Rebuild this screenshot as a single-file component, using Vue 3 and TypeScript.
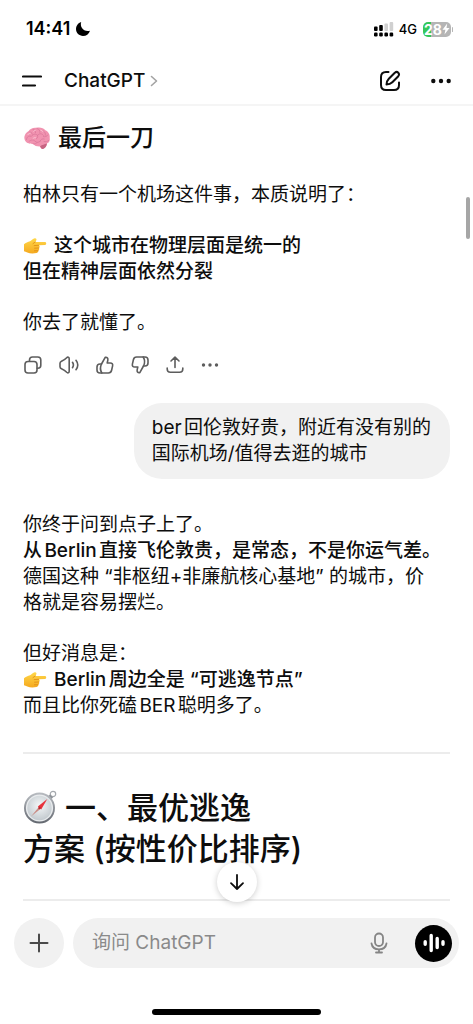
<script setup lang="ts">
import { ref } from 'vue'

interface Line {
  text: string
  strong?: boolean
  hand?: boolean
}

const draft = ref('')

const closing: Line[][] = [
  [{ text: '柏林只有一个机场这件事，本质说明了：' }],
  [
    { text: '这个城市在物理层面是统一的', strong: true, hand: true },
    { text: '但在精神层面依然分裂', strong: true },
  ],
  [{ text: '你去了就懂了。' }],
]

const question: string[] = ['ber回伦敦好贵，附近有没有别的', '国际机场/值得去逛的城市']

const answer: Line[][] = [
  [
    { text: '你终于问到点子上了。' },
    { text: '从Berlin直接飞伦敦贵，是常态，不是你运气差。', strong: true },
    { text: '德国这种 “非枢纽+非廉航核心基地” 的城市，价' },
    { text: '格就是容易摆烂。' },
  ],
  [
    { text: '但好消息是：' },
    { text: 'Berlin周边全是 “可逃逸节点”', strong: true, hand: true },
    { text: '而且比你死磕BER聪明多了。' },
  ],
]
</script>

<template>
  <div class="screen" lang="zh-CN">
    <svg class="defs" width="0" height="0" aria-hidden="true">
      <defs>
        <linearGradient id="handFill" x1="0" y1="0" x2="0" y2="1">
          <stop offset="0" stop-color="#ffd84a" />
          <stop offset="1" stop-color="#f5a91f" />
        </linearGradient>
        <symbol id="hand" viewBox="0 0 24 18">
          <path d="M1 7.2C2.6 5.6 5 5 7 4.2 8.6 3.4 10 1.6 11.7 1.2c1.5-.3 2.3 1 1.5 2.2L12.300 5h9.600c1.700 0 1.800 2.800.1 2.900l-6 .4c1 .8.9 2.100-.1 2.700.7.9.4 2.200-.7 2.600.4 1.200-.3 2.200-1.600 2.400-3.200.6-6.800.6-9.300-.5C3 15 2 14.600 1 14.300Z" fill="url(#handFill)" />
          <path d="M15.600 8.300l-4.400.3M15.800 11l-4.200.2M15 13.700l-3.600.1M12.300 5 10 6.600" fill="none" stroke="#dd8a14" stroke-width=".8" stroke-linecap="round" />
        </symbol>
      </defs>
    </svg>

    <header class="top">
      <div class="status">
        <span class="time">14:41</span>
        <svg class="moon" width="16" height="16" viewBox="0 0 16 16" aria-hidden="true">
          <path d="M6.200 1C4.600 5.800 8.400 11.200 15 9.700 13.900 13 11.200 15 8 15 4.100 15 1 12 1 8.100 1 4.900 3.100 2 6.200 1Z" fill="#000" />
        </svg>
        <span class="spacer"></span>
        <svg width="20" height="16" viewBox="0 0 20 16" aria-hidden="true">
          <g fill="#000">
            <rect x="0" y="5.500" width="3.600" height="4.500" rx="1" />
            <rect x="5.200" y="4" width="3.600" height="6" rx="1" />
            <rect x="0" y="11.500" width="3.600" height="4" rx="1.200" />
            <rect x="5.200" y="11.500" width="3.600" height="4" rx="1.200" />
            <rect x="10.400" y="11.500" width="3.600" height="4" rx="1.200" />
            <rect x="15.600" y="11.500" width="3.600" height="4" rx="1.200" />
          </g>
          <rect x="10.400" y="2.500" width="3.600" height="7.500" rx="1" fill="#d0d0d0" />
          <rect x="15.600" y="1" width="3.600" height="9" rx="1" fill="#d0d0d0" />
        </svg>
        <span class="network">4G</span>
        <span class="battery">
          <span>28</span>
          <svg width="8" height="12" viewBox="0 0 8 12" aria-hidden="true">
            <path d="M5.200.5.500 6.800h2.900L2.500 11.500 7.500 5H4.500Z" fill="#fff" />
          </svg>
        </span>
      </div>

      <nav class="nav">
        <button class="plain" type="button" aria-label="菜单">
          <svg width="20" height="20" viewBox="0 0 20 20">
            <path d="M1 5.500h18M1 14.500h12" stroke="#0d0d0d" stroke-width="2.200" stroke-linecap="round" />
          </svg>
        </button>
        <button class="plain model" type="button">
          ChatGPT
          <svg width="8" height="12" viewBox="0 0 8 12" aria-hidden="true">
            <path d="M1.500 1.500 6.500 6l-5 4.500" fill="none" stroke="#a3a3a3" stroke-width="1.600" stroke-linecap="round" stroke-linejoin="round" />
          </svg>
        </button>
        <span class="spacer"></span>
        <button class="plain" type="button" aria-label="新聊天">
          <svg width="22" height="22" viewBox="0 0 22 22" fill="none" stroke="#0d0d0d" stroke-width="2" stroke-linecap="round" stroke-linejoin="round">
            <path d="M9.500 2H7C3.500 2 2 3.500 2 7v8c0 3.500 1.500 5 5 5h8c3.500 0 5-1.500 5-5v-2.500" />
            <path d="M7.500 14.500c.1-2.400.7-4.200 2.300-5.800l6-6c2.600-2.100 5.500.9 3.500 3.500l-6 6c-1.600 1.600-3.400 2.200-5.800 2.300Z" />
          </svg>
        </button>
        <button class="plain more" type="button" aria-label="更多">
          <svg width="20" height="6" viewBox="0 0 20 6" fill="#0d0d0d">
            <circle cx="2.300" cy="3" r="2.200" /><circle cx="10" cy="3" r="2.200" /><circle cx="17.700" cy="3" r="2.200" />
          </svg>
        </button>
      </nav>
    </header>

    <main class="chat">
      <h2 class="closing-title">
        <svg width="28" height="24" viewBox="0 0 28 24" aria-hidden="true">
          <path d="M1.500 13C.8 9.500 3 6.500 5.500 5.200 7 2.600 10.500 1.200 13.500 1.800 17 .8 20.500 2 22.300 4.200 25.500 5.500 27.300 9 26.700 12c.6 2.600-.7 4.900-2.800 5.600-.1 2-1.100 4.500-3.400 5.200-1.900.5-2.700-1.100-3.500-2.400-3 .1-5.600-.7-6.800-2.500-3.300.2-8.100-.8-8.700-4.900Z" fill="#f193b0" />
          <path d="M17 20.400c.8 1.300 1.600 2.900 3.500 2.400 2.300-.7 3.300-3.200 3.400-5.200-2.400.8-4.900 1.300-6.900 2.800Z" fill="#c76482" />
          <path d="M3.500 13.500c.3-3 2.300-3.800 4.500-3.300M6 6c1.500-.3 3 .5 3.300 2M10 3.500c2 .2 2.800 1.500 2.500 3.200M14 2.500c2.200.8 3.300 2 2.900 3.900M8.300 10.200c2-2.500 4.500-2.500 6.300-.9 1.800-2.300 4.700-1.900 5.800.1M6 15.500c2-2 4.500-2 6-.3 1.600 1.500 3.600 1.500 5.200 0M10.200 17.900c1.800.3 3.200-.4 4-1.400M20.500 5c1.600 1 2.200 2.500 1.800 4.300M24.800 9c-1 1.600-2.500 2-4.400 1.600M17.200 15.200c.5-2 2.200-2.800 4-2.200M25.600 14.500c-1.300 1.300-3 1.600-4.600 1M14.600 9.300c.4 1.500.1 2.700-1.100 3.400" fill="none" stroke="#d9799a" stroke-width=".8" stroke-linecap="round" />
          <path d="M5 8.500c.6-1 1.300-1.300 2.200-1.300M10.700 5.200c.4-.5.900-.8 1.500-.8M17.800 4.200c1 .2 1.700.7 2 1.500M10 12.500c.7-.7 1.600-1 2.500-.8" fill="none" stroke="#fbc4d4" stroke-width="1" stroke-linecap="round" />
        </svg>
        <span>最后一刀</span>
      </h2>

      <p v-for="(para, i) in closing" :key="i" class="para">
        <span v-for="line in para" :key="line.text" class="line" :class="{ strong: line.strong }">
          <svg v-if="line.hand" class="hand" width="24" height="18" aria-hidden="true"><use href="#hand" /></svg>{{ line.text }}
        </span>
      </p>

      <div class="actions">
        <button class="plain" type="button" aria-label="复制">
          <svg width="20" height="20" viewBox="0 0 20 20">
            <rect x="2" y="6.500" width="12" height="11.500" rx="3" />
            <path d="M6.500 6.300V5c0-2 1-3 3-3h5.300c2 0 3 1 3 3v5.200c0 2-1 3-3 3h-.6" />
          </svg>
        </button>
        <button class="plain" type="button" aria-label="朗读">
          <svg width="22" height="20" viewBox="0 0 22 20">
            <path d="M2 8.300c0-1 .6-1.700 1.500-2.100C5.800 5.200 7.200 4.300 8.700 2.700c1-1 2.500-.5 2.500 1v12.600c0 1.500-1.500 2-2.500 1-1.500-1.600-2.900-2.500-5.200-3.500C2.600 13.400 2 12.700 2 11.700Z" />
            <path d="M14.500 7.300c1.100 1.600 1.100 3.800 0 5.400M18 5.300c2.200 2.900 2.200 6.500 0 9.400" />
          </svg>
        </button>
        <button class="plain" type="button" aria-label="赞">
          <svg width="20" height="20" viewBox="0 0 20 20">
            <path d="M6.500 9 10.200 2.300c2.200-.3 3 1.200 2.600 3L12.200 8h3.100c1.800 0 2.700 1.200 2.300 2.900l-1 4.400c-.4 1.800-1.400 2.700-3.200 2.700H5c-2 0-3-1-3-3v-3c0-2 1-3 3-3Z" />
            <path d="M6.500 9c-1.200 2.400-1.200 6.500.3 9" />
          </svg>
        </button>
        <button class="plain" type="button" aria-label="踩">
          <svg width="20" height="20" viewBox="0 0 20 20">
            <path d="M13.500 11 9.800 17.700c-2.200.3-3-1.200-2.600-3L7.800 12H4.700c-1.800 0-2.700-1.200-2.300-2.900l1-4.400C3.800 2.900 4.800 2 6.600 2H15c2 0 3 1 3 3v3c0 2-1 3-3 3Z" />
            <path d="M13.500 11c1.200-2.400 1.200-6.500-.3-9" />
          </svg>
        </button>
        <button class="plain" type="button" aria-label="分享">
          <svg width="20" height="20" viewBox="0 0 20 20">
            <path d="M10 12.500V2.300M6 6l4-3.800L14 6M2.200 13v1c0 2.300 1 3.300 3.200 3.300h9.200c2.200 0 3.200-1 3.200-3.300v-1" />
          </svg>
        </button>
        <button class="plain dots" type="button" aria-label="更多操作">
          <svg width="20" height="20" viewBox="0 0 20 20">
            <circle cx="3.500" cy="10" r="1.700" /><circle cx="10" cy="10" r="1.700" /><circle cx="16.500" cy="10" r="1.700" />
          </svg>
        </button>
      </div>

      <div class="bubble">
        <span v-for="row in question" :key="row" class="line">{{ row }}</span>
      </div>

      <p v-for="(para, i) in answer" :key="i" class="para">
        <span v-for="line in para" :key="line.text" class="line" :class="{ strong: line.strong }">
          <svg v-if="line.hand" class="hand" width="24" height="18" aria-hidden="true"><use href="#hand" /></svg>{{ line.text }}
        </span>
      </p>

      <hr class="rule" />

      <h1 class="section">
        <span class="line">
          <svg class="compass" width="34" height="34" viewBox="0 0 34 34" aria-hidden="true">
            <defs>
              <linearGradient id="rim" x1="0" y1="0" x2="0" y2="1">
                <stop offset="0" stop-color="#b9bdc2" />
                <stop offset="1" stop-color="#62676f" />
              </linearGradient>
              <radialGradient id="face" cx=".5" cy=".4" r=".6">
                <stop offset="0" stop-color="#f4f7f8" />
                <stop offset="1" stop-color="#c3cacf" />
              </radialGradient>
            </defs>
            <circle cx="30" cy="4" r="2.700" fill="none" stroke="#a5a9ae" stroke-width="1.200" />
            <path d="m26 5.500 3 3" stroke="#8d9298" stroke-width="3" />
            <circle cx="16.500" cy="18" r="15.500" fill="url(#rim)" />
            <circle cx="16.500" cy="18" r="13.600" fill="#e9ecee" />
            <circle cx="16.500" cy="18" r="12.200" fill="url(#face)" />
            <path d="M14.800 16.400 24.300 9 18.200 19.500Z" fill="#e8333c" />
            <path d="m15.600 17.200-7.400 9.100 9.200-7.300Z" fill="#c98d86" />
            <circle cx="16.500" cy="18" r="1.200" fill="#b82730" />
          </svg>一、最优逃逸
        </span>
        <span class="line">方案 (按性价比排序)</span>
      </h1>

      <hr class="rule last" />
      <span class="scroll-thumb" aria-hidden="true"></span>
    </main>

    <footer class="bottom">
      <button class="to-end" type="button" aria-label="滚动到底部">
        <svg width="18" height="18" viewBox="0 0 18 18">
          <path d="M9 2v14M3 10.200 9 16l6-5.800" fill="none" stroke="#0d0d0d" stroke-width="1.800" stroke-linecap="round" stroke-linejoin="round" />
        </svg>
      </button>
      <form class="composer" @submit.prevent>
        <button class="add" type="button" aria-label="添加">
          <svg width="20" height="20" viewBox="0 0 20 20">
            <path d="M10 1.500v17M1.500 10h17" stroke="#4a4a4a" stroke-width="2" stroke-linecap="round" />
          </svg>
        </button>
        <div class="field">
          <input v-model="draft" type="text" placeholder="询问 ChatGPT" aria-label="询问 ChatGPT" />
          <button class="plain" type="button" aria-label="听写">
            <svg width="18" height="22" viewBox="0 0 18 22" fill="none" stroke="#858585" stroke-width="1.800" stroke-linecap="round">
              <rect x="5" y="1.500" width="8" height="12.500" rx="4" />
              <path d="M1.500 11.500c.6 3.600 3.500 5.800 7.500 5.800s6.900-2.200 7.500-5.800M9 17.500v3M6 20.500h6" />
            </svg>
          </button>
          <button class="voice" type="button" aria-label="语音">
            <svg width="22" height="22" viewBox="0 0 22 22" stroke="#fff" stroke-width="3.400" stroke-linecap="round">
              <path d="M2.200 9.700v2.600M8.200 3.500v15M14.200 6.500v9M20 9.700v2.600" />
            </svg>
          </button>
        </div>
      </form>
      <div class="home-bar"></div>
    </footer>
  </div>
</template>

<style>
body {
  background: #fff;
}
</style>

<style scoped>
.screen {
  display: flex;
  flex-direction: column;
  min-height: 100vh;
  color: #0d0d0d;
  font-family: Inter, 'Noto Sans CJK SC', sans-serif;
  font-size: 19px;
  line-height: 26px;
  text-autospace: normal;
  background: #fff;
}
.defs {
  position: absolute;
}
button {
  display: flex;
  align-items: center;
  justify-content: center;
  padding: 0;
  border: 0;
  color: inherit;
  font: inherit;
  cursor: pointer;
}
.plain {
  background: none;
}
svg {
  flex: none;
}
.spacer {
  flex: 1;
}
.top {
  border-bottom: 2px solid #f5f5f5;
}
.status {
  display: flex;
  align-items: center;
  height: 58px;
  padding: 0 20px 0 26px;
  color: #000;
}
.time {
  font-size: 18px;
  font-weight: 600;
}
.moon {
  margin-left: 5px;
}
.network {
  margin: 0 6px 0 5px;
  font-size: 13px;
  font-weight: 500;
}
.battery {
  position: relative;
  display: flex;
  align-items: center;
  justify-content: center;
  width: 28px;
  height: 15px;
  margin-right: 2px;
  border-radius: 5px;
  color: #fff;
  font-size: 14px;
  font-weight: 700;
  line-height: 15px;
  background: linear-gradient(to right, #34c759 8px, #b5b5b5 8px);
}
.battery::after {
  position: absolute;
  right: -2px;
  width: 1px;
  height: 5px;
  border-radius: 1px;
  background: #b5b5b5;
  content: '';
}
.nav {
  display: flex;
  align-items: center;
  height: 46px;
  padding: 0 22px;
}
.model {
  gap: 5px;
  margin-left: 22px;
  font-weight: 500;
}
.more {
  margin-left: 30px;
}
.chat {
  position: relative;
  flex: 1;
  padding: 16px 23px 0;
}
.closing-title {
  display: flex;
  align-items: center;
  gap: 7px;
  margin: 0 0 28px;
  font-size: 24px;
  font-weight: 500;
  line-height: 32px;
}
.para {
  margin: 0 0 25px;
}
.line {
  display: block;
  white-space: nowrap;
}
.strong {
  font-weight: 500;
}
.hand {
  margin-right: 7px;
  vertical-align: -3px;
}
.actions {
  display: flex;
  gap: 15px;
  margin: -6px 0 28px;
}
.actions svg {
  fill: none;
  stroke: #5d5d5d;
  stroke-width: 1.6;
  stroke-linecap: round;
  stroke-linejoin: round;
}
.actions .dots svg {
  fill: #5d5d5d;
  stroke: none;
}
.bubble {
  width: fit-content;
  margin: 0 0 33px auto;
  padding: 12px 19px 12px 18px;
  border-radius: 28px;
  background: #f1f1f1;
}
.rule {
  height: 2px;
  margin: 33px 0;
  border: 0;
  background: #ececec;
}
.rule.last {
  margin: 30px 0 0;
}
.section {
  margin: 0;
  font-size: 31px;
  font-weight: 500;
  line-height: 41px;
}
.compass {
  margin-right: 8px;
  vertical-align: -5px;
}
.scroll-thumb {
  position: absolute;
  top: 91px;
  right: 3px;
  width: 4px;
  height: 42px;
  border-radius: 2px;
  background: #a6a6a6;
}
.bottom {
  position: relative;
  padding: 17px 14px 9px;
  background: #fff;
}
.to-end {
  position: absolute;
  top: -39px;
  left: calc(50% - 20px);
  width: 40px;
  height: 40px;
  border-radius: 50%;
  background: #fff;
  box-shadow: 0 1px 6px rgba(0, 0, 0, 0.2);
}
.composer {
  display: flex;
  gap: 9px;
}
.add {
  flex: none;
  width: 50px;
  height: 50px;
  border-radius: 50%;
  background: #f1f1f1;
}
.field {
  display: flex;
  flex: 1;
  align-items: center;
  min-width: 0;
  height: 50px;
  padding: 0 7px 0 19px;
  border-radius: 25px;
  background: #f1f1f1;
}
.field input {
  flex: 1;
  min-width: 0;
  padding: 0;
  border: 0;
  outline: 0;
  color: #0d0d0d;
  font: inherit;
  background: none;
}
.field input::placeholder {
  color: #8a8a8a;
  opacity: 1;
}
.voice {
  width: 37px;
  height: 37px;
  margin-left: 27px;
  border-radius: 50%;
  background: #000;
}
.home-bar {
  width: 38%;
  height: 6px;
  margin: 41px auto 0;
  border-radius: 3px;
  background: #000;
}
</style>
